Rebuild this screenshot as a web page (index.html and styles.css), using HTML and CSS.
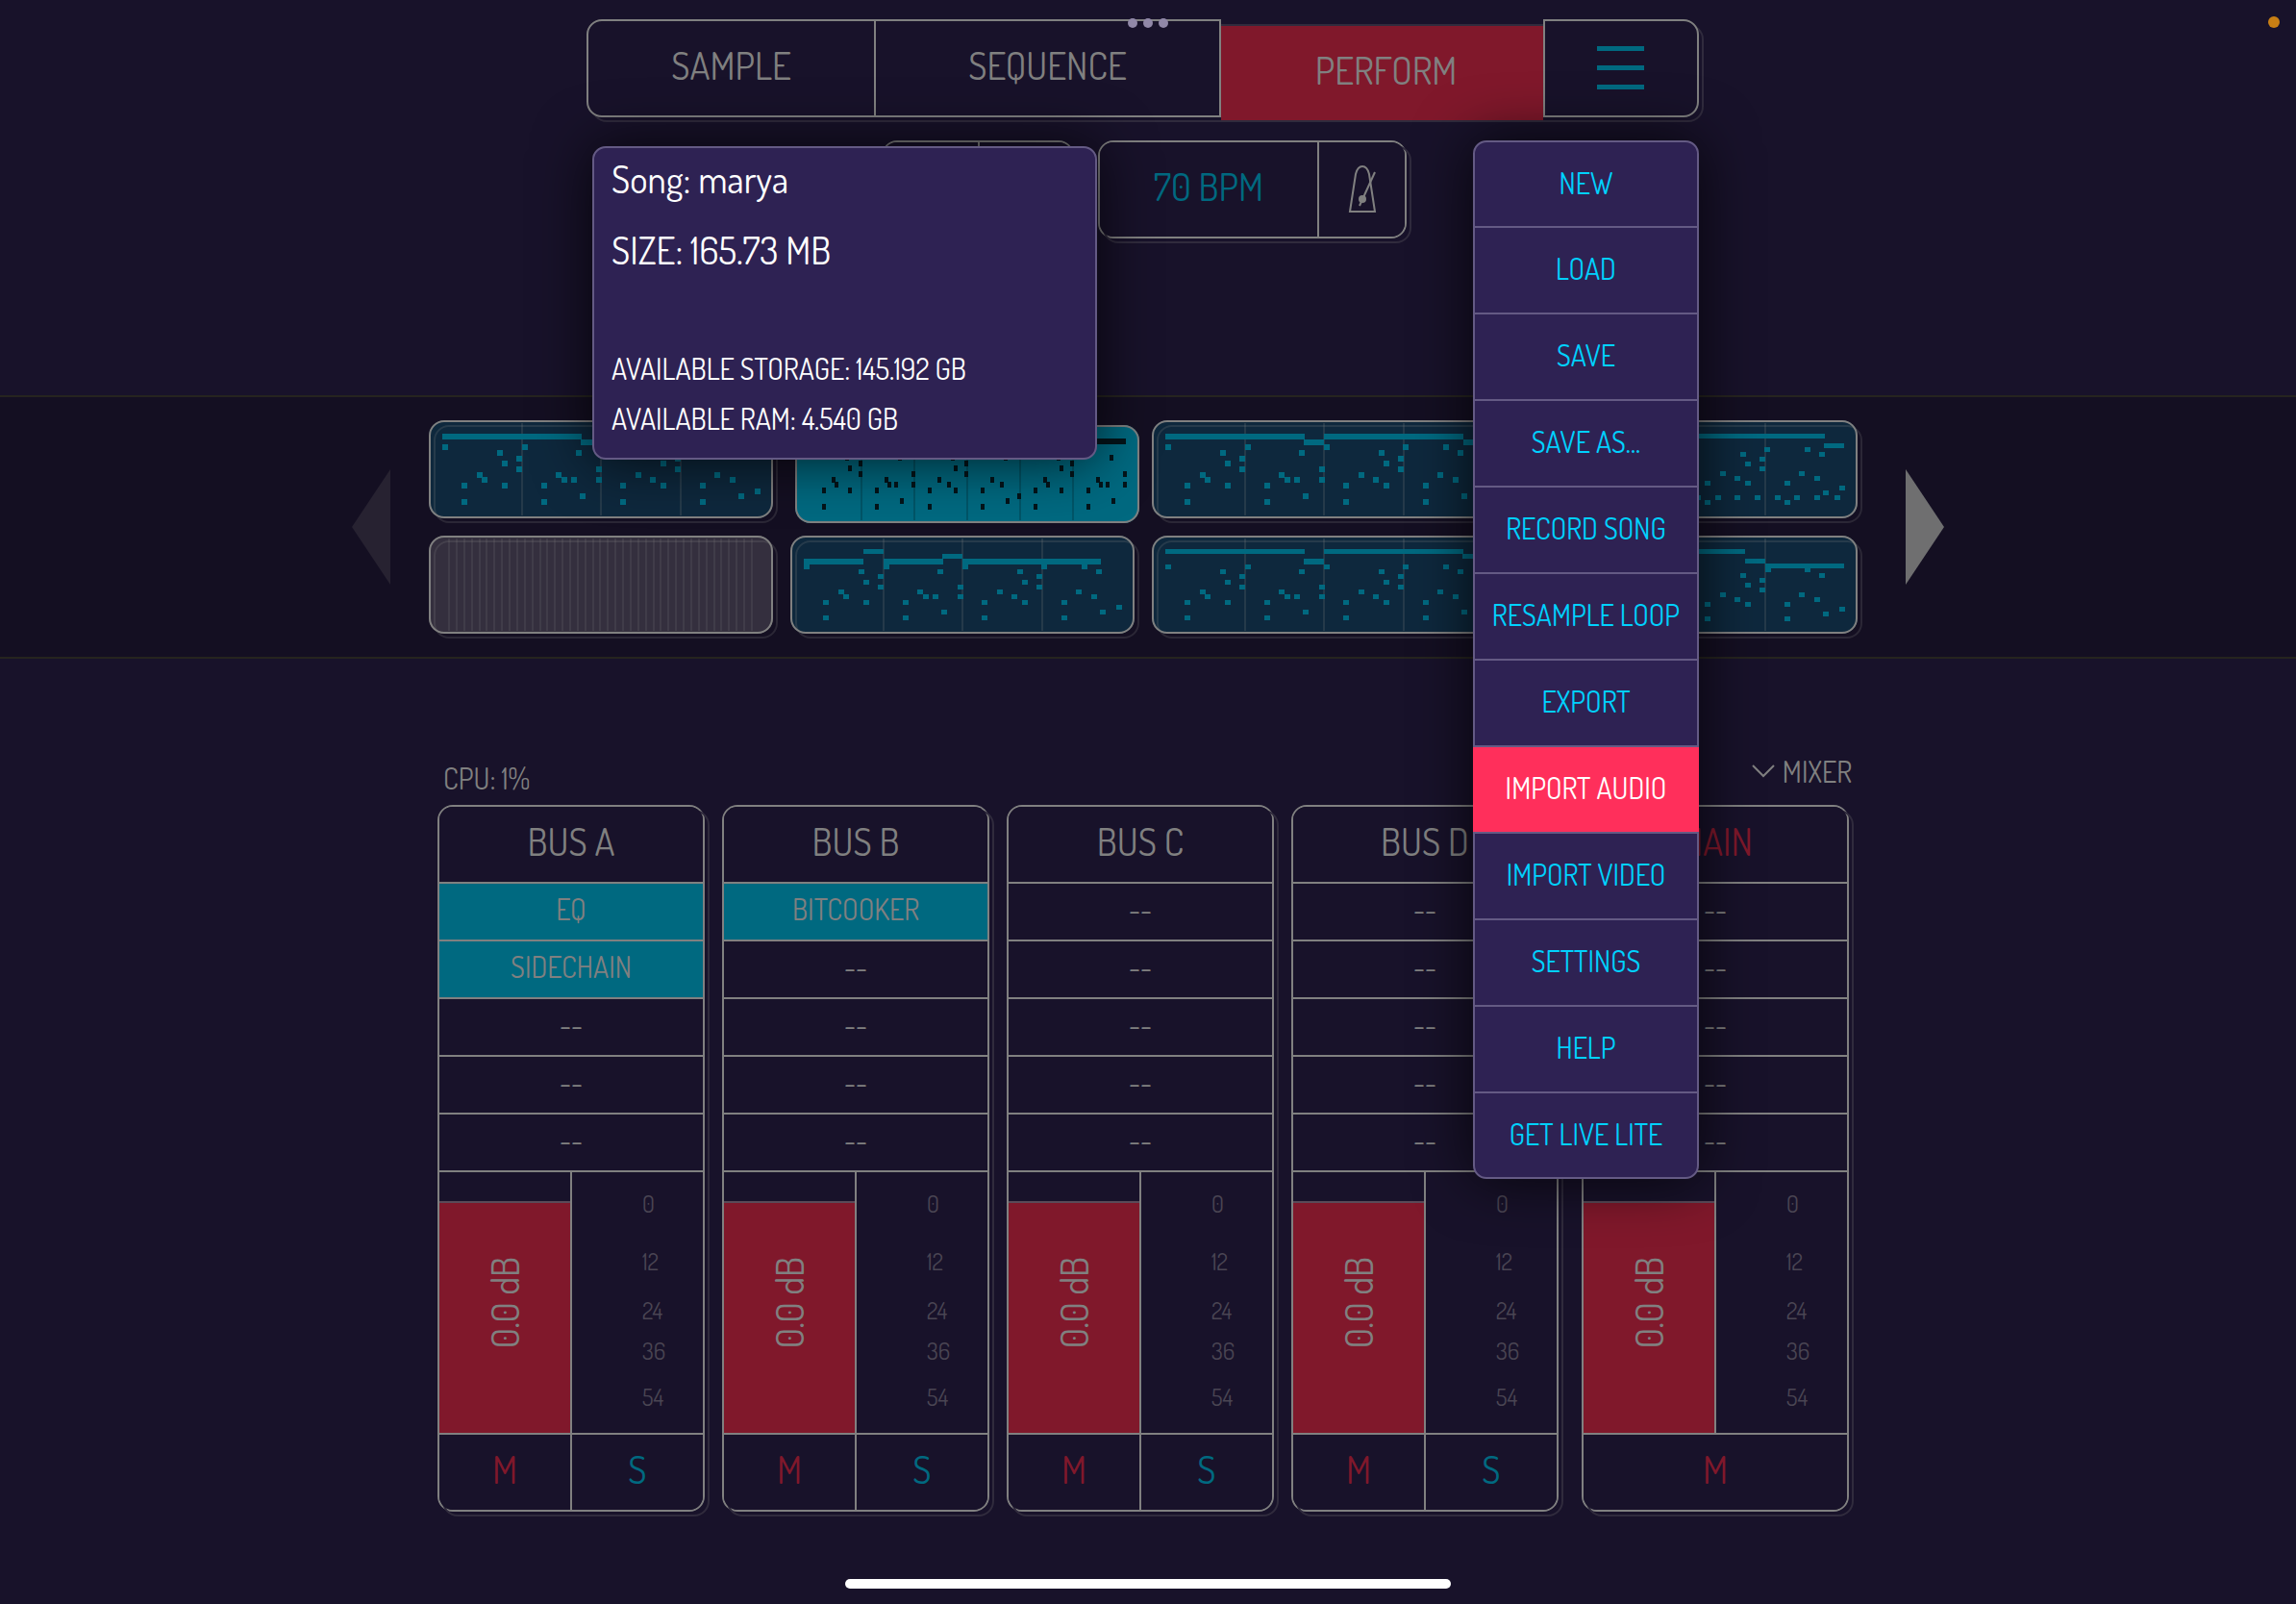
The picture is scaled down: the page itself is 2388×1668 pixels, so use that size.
FILE: index.html
```html
<!DOCTYPE html>
<html lang="en">
<head>
<meta charset="utf-8">
<meta name="viewport" content="width=device-width, initial-scale=1">
<title>Perform</title>
<link rel="stylesheet" href="styles.css">
</head>
<body>
<svg class="defs" aria-hidden="true">
  <symbol id="bars4" viewBox="0 0 358 102" preserveAspectRatio="none"><path d="M96 3h2v96h-2zM178 3h2v96h-2zM261 3h2v96h-2z"/></symbol>
  <symbol id="hits" viewBox="0 0 358 102" preserveAspectRatio="none"><path d="M14 30h6v5h-6zM97 30h6v5h-6zM179 30h6v5h-6zM261 30h6v5h-6zM303 30h6v5h-6zM71 35h6v5h-6zM153 35h6v5h-6zM236 35h6v5h-6zM318 35h6v5h-6zM91 40h6v5h-6zM256 40h6v5h-6zM76 46h6v5h-6zM241 46h6v5h-6zM91 51h6v5h-6zM174 51h6v5h-6zM256 51h6v5h-6zM50 56h6v5h-6zM132 56h6v5h-6zM215 56h6v5h-6zM297 56h6v5h-6zM55 61h6v5h-6zM138 61h6v5h-6zM148 61h6v5h-6zM174 61h6v5h-6zM230 61h6v5h-6zM313 61h6v5h-6zM34 67h6v5h-6zM76 67h6v5h-6zM117 67h6v5h-6zM199 67h6v5h-6zM241 67h6v5h-6zM282 67h6v5h-6zM339 72h6v5h-6zM157 77h6v5h-6zM322 77h6v5h-6zM34 83h6v5h-6zM117 83h6v5h-6zM199 83h6v5h-6zM282 83h6v5h-6z"/></symbol>
  <symbol id="loop" viewBox="0 0 358 102" preserveAspectRatio="none"><path d="M14 14h145v6h20v-6h145v6h20v6h-20v-6h-145v6h-21v-6h-144zM14 25h6v6h-6zM97 25h6v6h-6zM179 25h6v6h-6zM261 25h6v6h-6zM303 25h6v6h-6zM71 31h6v6h-6zM153 31h6v6h-6zM236 31h6v6h-6zM318 31h6v6h-6zM91 37h6v6h-6zM256 37h6v6h-6zM76 42h6v6h-6zM241 42h6v6h-6zM91 48h6v6h-6zM174 48h6v6h-6zM256 48h6v6h-6zM50 54h6v6h-6zM132 54h6v6h-6zM215 54h6v6h-6zM297 54h6v6h-6zM55 59h6v6h-6zM138 59h6v6h-6zM148 59h6v6h-6zM174 59h6v6h-6zM230 59h6v6h-6zM313 59h6v6h-6zM34 65h6v6h-6zM76 65h6v6h-6zM117 65h6v6h-6zM199 65h6v6h-6zM241 65h6v6h-6zM282 65h6v6h-6zM339 71h6v6h-6zM157 76h6v6h-6zM322 76h6v6h-6zM34 82h6v6h-6zM117 82h6v6h-6zM199 82h6v6h-6zM282 82h6v6h-6z"/></symbol>
</svg>

<div class="app">
  <header class="top">
    <nav class="tabs" aria-label="Views">
      <button class="tab" type="button">SAMPLE</button>
      <button class="tab" type="button">SEQUENCE</button>
      <button class="tab tab-active" type="button">PERFORM</button>
      <button class="tab tab-menu" type="button" aria-label="Menu">
        <svg width="50" height="48" viewBox="0 0 50 48" fill="#006980"><path d="M0 1h49v5H0zM0 21h49v5H0zM0 41h49v5H0z"/></svg>
      </button>
    </nav>

    <div class="transport">
      <div class="group group-play">
        <button type="button" aria-label="Play"></button>
        <button type="button" aria-label="Record"></button>
      </div>
      <div class="group group-tempo">
        <button class="tempo" type="button">70 BPM</button>
        <button type="button" aria-label="Metronome">
          <svg width="30" height="52" viewBox="0 0 30 52" fill="none" stroke="#808080" stroke-width="2"><path d="M2 49 8 10Q10 2 15 2t7 8l6 39z"/><path d="M28 8 12 43"/><circle cx="15" cy="36" r="3" fill="#808080"/></svg>
        </button>
      </div>
    </div>

    <aside class="song">
      <p class="song-main">Song: marya</p>
      <p class="song-main">SIZE: 165.73 MB</p>
      <p class="song-info song-first">AVAILABLE STORAGE: 145.192 GB</p>
      <p class="song-info">AVAILABLE RAM: 4.540 GB</p>
    </aside>

    <div class="menu" role="menu">
      <button type="button" role="menuitem">NEW</button>
      <button type="button" role="menuitem">LOAD</button>
      <button type="button" role="menuitem">SAVE</button>
      <button type="button" role="menuitem">SAVE AS...</button>
      <button type="button" role="menuitem">RECORD SONG</button>
      <button type="button" role="menuitem">RESAMPLE LOOP</button>
      <button type="button" role="menuitem">EXPORT</button>
      <button class="menu-active" type="button" role="menuitem">IMPORT AUDIO</button>
      <button type="button" role="menuitem">IMPORT VIDEO</button>
      <button type="button" role="menuitem">SETTINGS</button>
      <button type="button" role="menuitem">HELP</button>
      <button type="button" role="menuitem">GET LIVE LITE</button>
    </div>
  </header>

  <section class="band" aria-label="Patterns">
    <button class="arrow" type="button" aria-label="Previous"><svg width="40" height="120" viewBox="0 0 40 120"><path d="M40 0v120L0 60z" fill="#272231"/></svg></button>
    <div class="patterns">
      <button class="pattern" type="button" aria-label="Pattern 1"><svg viewBox="0 0 358 102" preserveAspectRatio="none"><use class="grid" href="#bars4"/><use class="notes" href="#loop"/></svg></button>
      <button class="pattern pattern-on" type="button" aria-label="Pattern 2"><svg viewBox="0 0 358 102" preserveAspectRatio="none"><path class="grid" d="M68 3h2v96h-2zM123 3h2v96h-2zM178 3h2v96h-2zM233 3h2v96h-2zM288 3h2v96h-2z"/><path class="notes" d="M14 14h330v6H14zM52 31h4v6h-4zM107 31h4v6h-4zM162 31h4v6h-4zM217 31h4v6h-4zM272 31h4v6h-4zM327 31h4v6h-4zM66 37h4v6h-4zM176 37h4v6h-4zM286 37h4v6h-4zM55 42h4v6h-4zM165 42h4v6h-4zM275 42h4v6h-4zM66 48h4v6h-4zM121 48h4v6h-4zM176 48h4v6h-4zM286 48h4v6h-4zM341 48h4v6h-4zM38 54h4v6h-4zM93 54h4v6h-4zM148 54h4v6h-4zM203 54h4v6h-4zM258 54h4v6h-4zM313 54h4v6h-4zM41 59h4v6h-4zM96 59h4v6h-4zM103 59h4v6h-4zM121 59h4v6h-4zM158 59h4v6h-4zM213 59h4v6h-4zM261 59h4v6h-4zM316 59h4v6h-4zM323 59h4v6h-4zM341 59h4v6h-4zM28 65h4v6h-4zM55 65h4v6h-4zM83 65h4v6h-4zM138 65h4v6h-4zM165 65h4v6h-4zM193 65h4v6h-4zM248 65h4v6h-4zM275 65h4v6h-4zM303 65h4v6h-4zM231 71h4v6h-4zM109 76h4v6h-4zM219 76h4v6h-4zM329 76h4v6h-4zM28 82h4v6h-4zM83 82h4v6h-4zM138 82h4v6h-4zM193 82h4v6h-4zM248 82h4v6h-4zM303 82h4v6h-4z"/></svg></button>
      <button class="pattern" type="button" aria-label="Pattern 3"><svg viewBox="0 0 358 102" preserveAspectRatio="none"><use class="grid" href="#bars4"/><use class="notes" href="#loop"/></svg></button>
      <button class="pattern" type="button" aria-label="Pattern 4"><svg viewBox="0 0 358 102" preserveAspectRatio="none"><use class="grid" href="#bars4"/><path class="notes" d="M179 14h145v5H179zM323 24h21v5h-21zM261 28h6v5h-6zM303 28h6v5h-6zM236 33h6v5h-6zM318 33h6v5h-6zM256 38h6v5h-6zM241 43h6v5h-6zM256 48h6v5h-6zM215 53h6v5h-6zM297 53h6v5h-6zM230 58h6v5h-6zM313 58h6v5h-6zM199 63h6v5h-6zM241 63h6v5h-6zM282 63h6v5h-6zM339 68h6v5h-6zM322 73h6v5h-6zM189 78h6v5h-6zM210 78h6v5h-6zM230 78h6v5h-6zM251 78h6v5h-6zM272 78h6v5h-6zM292 78h6v5h-6zM313 78h6v5h-6zM334 78h6v5h-6zM199 83h6v5h-6zM282 83h6v5h-6z"/></svg></button>
      <button class="pattern pattern-empty" type="button" aria-label="Pattern 5"><svg viewBox="0 0 358 102" preserveAspectRatio="none"><path class="ticks" d="M21 3v96M29 3v96M37 3v96M45 3v96M53 3v96M60 3v96M68 3v96M76 3v96M84 3v96M92 3v96M100 3v96M108 3v96M116 3v96M123 3v96M131 3v96M139 3v96M147 3v96M155 3v96M163 3v96M171 3v96M178 3v96M186 3v96M194 3v96M202 3v96M210 3v96M218 3v96M226 3v96M234 3v96M241 3v96M249 3v96M257 3v96M265 3v96M273 3v96M281 3v96M289 3v96M297 3v96M304 3v96M312 3v96M320 3v96M328 3v96M336 3v96"/></svg></button>
      <button class="pattern" type="button" aria-label="Pattern 6"><svg viewBox="0 0 358 102" preserveAspectRatio="none"><use class="grid" href="#bars4"/><use class="notes" href="#hits"/><path class="notes" d="M14 24h62v6H14zM76 14h21v5H76zM97 24h62v6H97zM158 19h21v5h-21zM179 24h144v6H179z"/></svg></button>
      <button class="pattern" type="button" aria-label="Pattern 7"><svg viewBox="0 0 358 102" preserveAspectRatio="none"><use class="grid" href="#bars4"/><use class="notes" href="#hits"/><path class="notes" d="M14 14h145v5H14zM158 24h21v6h-21zM179 14h145v5H179zM323 19h21v5h-21z"/></svg></button>
      <button class="pattern" type="button" aria-label="Pattern 8"><svg viewBox="0 0 358 102" preserveAspectRatio="none"><use class="grid" href="#bars4"/><path class="notes" d="M179 14h62v5h-62zM241 24h21v5h-21zM262 29h82v5h-82zM262 33h6v5h-6zM303 33h6v5h-6zM236 39h6v5h-6zM318 39h6v5h-6zM256 44h6v5h-6zM241 49h6v5h-6zM256 54h6v5h-6zM215 59h6v5h-6zM297 59h6v5h-6zM230 64h6v5h-6zM313 64h6v5h-6zM199 69h6v5h-6zM241 69h6v5h-6zM282 69h6v5h-6zM339 74h6v5h-6zM322 79h6v5h-6zM199 84h6v5h-6zM282 84h6v5h-6z"/></svg></button>
    </div>
    <button class="arrow arrow-next" type="button" aria-label="Next"><svg width="40" height="120" viewBox="0 0 40 120"><path d="M0 0v120l40-60z" fill="#6f6f70"/></svg></button>
  </section>

  <main class="mixer">
    <div class="mixer-head">
      <span>CPU: 1%</span>
      <button class="mixer-toggle" type="button"><svg width="24" height="14" viewBox="0 0 24 14" fill="none" stroke="#808080" stroke-width="2"><path d="m1 1 11 11L23 1"/></svg>MIXER</button>
    </div>
    <div class="strips">
      <section class="strip">
        <h2>BUS A</h2>
        <button class="slot slot-on" type="button">EQ</button>
        <button class="slot slot-on" type="button">SIDECHAIN</button>
        <button class="slot" type="button">--</button>
        <button class="slot" type="button">--</button>
        <button class="slot" type="button">--</button>
        <div class="level">
          <div class="fader"><input id="vol-a" type="range" min="0" max="100" value="89" aria-label="Bus A volume" style="--level: 89%"><output for="vol-a">0.0 dB</output></div>
          <ul class="scale"><li>0</li><li>12</li><li>24</li><li>36</li><li>54</li></ul>
        </div>
        <div class="switches"><button class="mute" type="button">M</button><button class="solo" type="button">S</button></div>
      </section>
      <section class="strip">
        <h2>BUS B</h2>
        <button class="slot slot-on" type="button">BITCOOKER</button>
        <button class="slot" type="button">--</button>
        <button class="slot" type="button">--</button>
        <button class="slot" type="button">--</button>
        <button class="slot" type="button">--</button>
        <div class="level">
          <div class="fader"><input id="vol-b" type="range" min="0" max="100" value="89" aria-label="Bus B volume" style="--level: 89%"><output for="vol-b">0.0 dB</output></div>
          <ul class="scale"><li>0</li><li>12</li><li>24</li><li>36</li><li>54</li></ul>
        </div>
        <div class="switches"><button class="mute" type="button">M</button><button class="solo" type="button">S</button></div>
      </section>
      <section class="strip">
        <h2>BUS C</h2>
        <button class="slot" type="button">--</button>
        <button class="slot" type="button">--</button>
        <button class="slot" type="button">--</button>
        <button class="slot" type="button">--</button>
        <button class="slot" type="button">--</button>
        <div class="level">
          <div class="fader"><input id="vol-c" type="range" min="0" max="100" value="89" aria-label="Bus C volume" style="--level: 89%"><output for="vol-c">0.0 dB</output></div>
          <ul class="scale"><li>0</li><li>12</li><li>24</li><li>36</li><li>54</li></ul>
        </div>
        <div class="switches"><button class="mute" type="button">M</button><button class="solo" type="button">S</button></div>
      </section>
      <section class="strip">
        <h2>BUS D</h2>
        <button class="slot" type="button">--</button>
        <button class="slot" type="button">--</button>
        <button class="slot" type="button">--</button>
        <button class="slot" type="button">--</button>
        <button class="slot" type="button">--</button>
        <div class="level">
          <div class="fader"><input id="vol-d" type="range" min="0" max="100" value="89" aria-label="Bus D volume" style="--level: 89%"><output for="vol-d">0.0 dB</output></div>
          <ul class="scale"><li>0</li><li>12</li><li>24</li><li>36</li><li>54</li></ul>
        </div>
        <div class="switches"><button class="mute" type="button">M</button><button class="solo" type="button">S</button></div>
      </section>
      <section class="strip strip-main">
        <h2>MAIN</h2>
        <button class="slot" type="button">--</button>
        <button class="slot" type="button">--</button>
        <button class="slot" type="button">--</button>
        <button class="slot" type="button">--</button>
        <button class="slot" type="button">--</button>
        <div class="level">
          <div class="fader"><input id="vol-main" type="range" min="0" max="100" value="89" aria-label="Main volume" style="--level: 89%"><output for="vol-main">0.0 dB</output></div>
          <ul class="scale"><li>0</li><li>12</li><li>24</li><li>36</li><li>54</li></ul>
        </div>
        <div class="switches"><button class="mute" type="button">M</button></div>
      </section>
    </div>
  </main>

  <div class="home-bar"></div>
  <div class="window-dots"><i></i><i></i><i></i></div>
  <div class="mic-dot"></div>
</div>
</body>
</html>
```

FILE: styles.css
```css
:root {
  --bg: #18122a;
  --band: #140f22;
  --line: #808080;
  --ghost: #302b3d;
  --text: #808080;
  --teal: #006980;
  --red: #80182b;
  --panel: #2e2253;
  --panel-line: #645a84;
  --cyan: #00d1ff;
}

* { box-sizing: border-box; }

body {
  margin: 0;
  background: var(--bg);
  color: var(--text);
  font-family: "Dosis", "Liberation Sans Narrow", "Roboto Condensed", "Liberation Sans", sans-serif;
  font-size: 30px;
  line-height: 34px;
}

button {
  margin: 0;
  padding: 0;
  border: 0;
  background: none;
  color: inherit;
  font: inherit;
}

button svg { display: block; }

h2, p, ul { margin: 0; padding: 0; }

.defs { position: absolute; width: 0; height: 0; }

.app { position: relative; overflow: hidden; }

/* Tabs */
.top {
  position: relative;
  z-index: 2;
  width: 1168px;
  max-width: 100%;
  height: 391px;
  margin: 20px auto 0;
  padding-right: 11px;
}

.tabs {
  position: relative;
  display: grid;
  grid-template-columns: 301fr 359fr 335fr 162fr;
  font-size: 39px;
}

.tabs::before,
.group::before,
.pattern::before,
.strip::before {
  content: "";
  position: absolute;
  z-index: -1;
  inset: 5px -5px -5px 5px;
  border: 2px solid var(--ghost);
  border-radius: 16px;
}

.tab {
  height: 102px;
  padding-bottom: 6px;
  border: 2px solid var(--line);
  border-left-width: 0;
  background: var(--bg);
}

.tab:first-child {
  border-left-width: 2px;
  border-radius: 16px 0 0 16px;
}

.tab-menu {
  display: grid;
  place-items: center;
  padding: 0;
  border-left-width: 2px;
  border-radius: 0 16px 16px 0;
}

.tab-active {
  margin: 5px 0 -5px;
  padding-left: 8px;
  border: 0;
  border-top: 2px solid var(--ghost);
  border-bottom: 2px solid var(--ghost);
  background: var(--red);
}

/* Transport */
.transport {
  display: flex;
  justify-content: center;
  gap: 25px;
  margin-top: 24px;
  padding-left: 3px;
}

.group {
  position: relative;
  display: grid;
  height: 102px;
  border: 2px solid var(--line);
  border-radius: 16px;
  background: var(--bg);
}

.group-play { width: 200px; grid-template-columns: 1fr 1fr; }
.group-tempo { width: 321px; grid-template-columns: 226px 1fr; }

/* the ghost outline only shows past the lower right edge */
.group::before,
.strip::before {
  inset: 3px -7px -7px 3px;
}

.group::after,
.strip::after {
  content: "";
  position: absolute;
  z-index: -1;
  inset: 0;
  border-radius: 14px;
  background: var(--bg);
}

.group,
.strip { z-index: 0; }

.group button {
  display: grid;
  place-items: center;
}

.group button + button { border-left: 2px solid var(--line); }

.group .tempo {
  padding-bottom: 6px;
  color: var(--teal);
  font-size: 39px;
}

/* Panels over the page */
.song,
.menu {
  position: absolute;
  z-index: 3;
  border: 2px solid var(--panel-line);
  border-radius: 14px;
  background: var(--panel);
  box-shadow: 0 0 60px rgba(0, 0, 0, 0.75);
}

.song {
  top: 132px;
  left: 6px;
  width: 525px;
  height: 326px;
  padding: 0 18px;
  color: #fff;
}

.song-main { margin-bottom: 10px; font-size: 39px; line-height: 64px; }
.song-info { line-height: 52px; }
.song-first { margin-top: 65px; }

.menu {
  top: 126px;
  right: 11px;
  display: flex;
  flex-direction: column;
  width: 235px;
}

.menu button {
  height: 90px;
  padding-bottom: 4px;
  border-bottom: 2px solid var(--panel-line);
  color: var(--cyan);
  white-space: nowrap;
}

.menu button:first-child { height: 89px; }
.menu button:last-child { height: 87px; border-bottom: 0; }

.menu .menu-active {
  margin: 0 -2px;
  background: #ff2f5b;
  color: #fff;
}

/* Patterns */
.band {
  position: relative;
  z-index: 0;
  display: flex;
  align-items: center;
  justify-content: center;
  gap: 40px;
  padding: 24px 0;
  border: solid #26241f;
  border-width: 2px 0;
  background: var(--band);
}

.arrow-next { margin-left: 10px; }

.patterns {
  display: grid;
  grid-template-columns: repeat(4, 1fr);
  gap: 18px;
  width: 1486px;
}

.pattern {
  position: relative;
  height: 102px;
  border-radius: 16px;
  background: rgba(10, 56, 80, 0.6);
  box-shadow: inset 0 0 0 2px var(--line);
}

.pattern::before { z-index: 0; border-color: rgba(128, 128, 128, 0.22); }

.pattern svg {
  position: relative;
  width: 100%;
  height: 100%;
}

.grid { fill: rgba(128, 128, 128, 0.2); }
.notes { fill: var(--teal); }
.ticks { stroke: rgba(128, 128, 128, 0.16); stroke-width: 2; }

.pattern-empty { background: #342f3e; }

.pattern-on {
  transform: translate(5px, 5px);
  background: var(--teal);
}

.pattern-on::before { display: none; }
.pattern-on .grid { fill: rgba(0, 40, 50, 0.3); }
.pattern-on .notes { fill: #04141a; }

/* Mixer */
.mixer {
  width: 1478px;
  max-width: 100%;
  margin: 84px auto 0;
  padding-right: 10px;
}

.mixer-head {
  display: flex;
  align-items: flex-end;
  justify-content: space-between;
  height: 68px;
  margin-right: -3px;
  padding: 0 0 11px 6px;
}

.mixer-toggle {
  display: flex;
  align-items: center;
  gap: 8px;
  padding-bottom: 7px;
}

.strips { display: flex; gap: 18px; }

.strip {
  position: relative;
  flex: 1;
  display: flex;
  flex-direction: column;
  border: 2px solid var(--line);
  border-radius: 16px;
}

.strip-main { margin-left: 6px; }

.strip h2 {
  padding-bottom: 6px;
  font-size: 39px;
  font-weight: 400;
  line-height: 72px;
  text-align: center;
}

.strip-main h2 { color: var(--red); }

.slot {
  height: 60px;
  padding-bottom: 6px;
  border-top: 2px solid var(--line);
}

.slot-on { background: var(--teal); }

.level {
  display: grid;
  grid-template: minmax(0, 1fr) / calc(50% - 1px) 1fr;
  height: 273px;
  border-top: 2px solid var(--line);
}

.fader {
  position: relative;
  display: grid;
  grid-template: minmax(0, 1fr) / minmax(0, 1fr);
}

.fader input {
  width: 100%;
  height: 100%;
  min-height: 0;
  margin: 0;
  appearance: none;
  writing-mode: vertical-lr;
  direction: rtl;
  background: linear-gradient(to top, var(--red) var(--level), transparent 0);
}

.fader input::-webkit-slider-thumb { appearance: none; width: 136px; height: 2px; background: #5a4a58; }

.fader output {
  position: absolute;
  inset: 0;
  display: grid;
  place-items: center;
  writing-mode: vertical-rl;
  transform: rotate(180deg);
  font-size: 39px;
  pointer-events: none;
}

.scale {
  display: grid;
  grid-template-rows: 60px 51px 42px 48px auto;
  padding: 21px 0 0 73px;
  border-left: 2px solid var(--line);
  color: #4a4553;
  font-size: 24px;
  line-height: 24px;
  list-style: none;
}

.switches {
  display: flex;
  height: 80px;
  border-top: 2px solid var(--line);
  font-size: 39px;
}

.switches button { flex: 1; padding-bottom: 6px; }
.switches button + button { border-left: 2px solid var(--line); }
.mute { color: var(--red); }
.solo { color: var(--teal); }

/* Device chrome */
.home-bar {
  width: 630px;
  max-width: 60%;
  height: 10px;
  margin: 70px auto 16px;
  border-radius: 5px;
  background: #fff;
}

.window-dots {
  position: absolute;
  z-index: 3;
  top: 19px;
  right: 0;
  left: 0;
  display: flex;
  justify-content: center;
  gap: 6px;
}

.window-dots i {
  width: 10px;
  height: 10px;
  border-radius: 50%;
  background: #9188a8;
}

.mic-dot {
  position: absolute;
  top: 17px;
  right: 17px;
  width: 12px;
  height: 12px;
  border-radius: 50%;
  background: #c87f14;
}
```
